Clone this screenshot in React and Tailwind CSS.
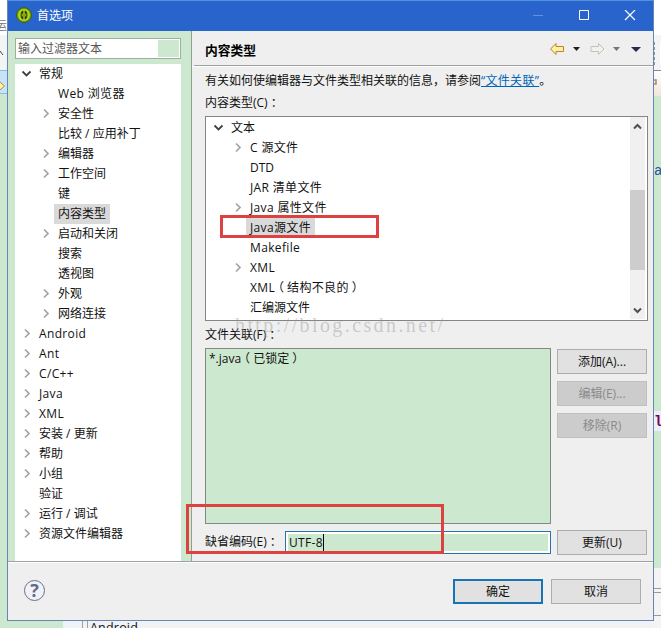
import clsx from 'clsx';

// state: 'open' | 'closed' | undefined (leaf)
const PREFERENCES = [
  { label: '常规', level: 0, state: 'open' },
  { label: 'Web 浏览器', level: 1, latin: true },
  { label: '安全性', level: 1, state: 'closed' },
  { label: '比较 / 应用补丁', level: 1 },
  { label: '编辑器', level: 1, state: 'closed' },
  { label: '工作空间', level: 1, state: 'closed' },
  { label: '键', level: 1 },
  { label: '内容类型', level: 1, selected: true },
  { label: '启动和关闭', level: 1, state: 'closed' },
  { label: '搜索', level: 1 },
  { label: '透视图', level: 1 },
  { label: '外观', level: 1, state: 'closed' },
  { label: '网络连接', level: 1, state: 'closed' },
  { label: 'Android', level: 0, state: 'closed', latin: true },
  { label: 'Ant', level: 0, state: 'closed', latin: true },
  { label: 'C/C++', level: 0, state: 'closed', latin: true },
  { label: 'Java', level: 0, state: 'closed', latin: true },
  { label: 'XML', level: 0, state: 'closed', latin: true },
  { label: '安装 / 更新', level: 0, state: 'closed' },
  { label: '帮助', level: 0, state: 'closed' },
  { label: '小组', level: 0, state: 'closed' },
  { label: '验证', level: 0 },
  { label: '运行 / 调试', level: 0, state: 'closed' },
  { label: '资源文件编辑器', level: 0, state: 'closed' },
];

const CONTENT_TYPES = [
  { label: '文本', level: 0, state: 'open' },
  { label: 'C 源文件', level: 1, state: 'closed', latin: true },
  { label: 'DTD', level: 1 },
  { label: 'JAR 清单文件', level: 1, latin: true },
  { label: 'Java 属性文件', level: 1, state: 'closed', latin: true },
  { label: 'Java源文件', level: 1, selected: true, latin: true },
  { label: 'Makefile', level: 1, latin: true },
  { label: 'XML', level: 1, state: 'closed', latin: true },
  { label: 'XML（结构不良的）', level: 1, latin: true },
  { label: '汇编源文件', level: 1 },
];

export default function App() {
  return (
    <div className="relative flex h-[628px] w-[661px] overflow-hidden bg-[#cce8cf] font-['Open_Sans','Noto_Sans_CJK_SC',sans-serif] text-[12px] leading-5 text-[#111]">
      <LeftEditorEdge />
      <div className="flex w-[647px] shrink-0 flex-col">
        <Dialog />
        <BottomEditorEdge />
      </div>
      <RightEditorEdge />

      {/* Annotations drawn over the dialog */}
      <div className="absolute left-[220px] top-[215px] h-[23px] w-[159px] border-[3px] border-[#dc4340]" />
      <div className="absolute left-[186px] top-[504px] h-[50px] w-[258px] border-[3px] border-[#dc4340]" />
      <div className="absolute left-[235px] top-[315px] whitespace-pre font-['Liberation_Serif',serif] text-[20px] leading-5 tracking-[2.4px] text-[#999]/45">
        http://blog.csdn.net/
      </div>
    </div>
  );
}

function Dialog() {
  return (
    <div className="flex h-[621px] flex-col border-x border-b border-[#6785b5] bg-[#efefef]">
      <TitleBar />
      <div className="flex h-[530px]">
        <Sidebar />
        <ContentTypesPage />
      </div>
      <div className="flex h-[59px] items-center border-t border-[#a0a0a0] pl-[16px] pr-[12px] shadow-[inset_0_1px_0_#fff]">
        <HelpIcon />
        <div className="ml-auto flex gap-2">
          <Button primary>确定</Button>
          <Button>取消</Button>
        </div>
      </div>
    </div>
  );
}

function TitleBar() {
  return (
    <div className="flex h-[31px] items-center border-t border-[#5293dc] bg-[#2964cc] pl-[8px] text-white">
      <svg className="-mt-[2px] size-4" viewBox="0 0 16 16">
        <circle cx="8" cy="8" r="7.5" fill="#69a010" stroke="#3c6510" />
        <circle cx="8" cy="8" r="6" fill="#b5d51a" />
        <path d="M7.3 3.5C5 4 4.6 6 4.6 8s.4 4 2.7 4.5zM8.7 3.5C11 4 11.4 6 11.4 8s-.4 4-2.7 4.5z" fill="#24380b" />
        <path d="M6.2 6.5v3M9.8 6.5v3" stroke="#b5d51a" />
      </svg>
      <span className="ml-[5px]">首选项</span>
      <svg className="ml-auto mr-[17px] h-[12px] w-[103px]" viewBox="0 0 103 12" fill="none">
        <path d="M0 5.5h10" stroke="#6590da" />
        <path d="M46.5 .5h9v9h-9z" stroke="#fff" />
        <path d="M92 0l10 10M102 0L92 10" stroke="#fff" strokeWidth="1.2" />
      </svg>
    </div>
  );
}

function Sidebar() {
  return (
    <div className="w-[184px] shrink-0 border-r border-[#91a093] bg-[#cce8cf] pl-[7px]">
      <div className="mt-[7px] flex h-[21px] w-[166px] items-center border border-[#a1aca2] bg-white pl-[2px] text-[#555]">
        <span>输入过滤器文本</span>
        <div className="ml-auto mr-px h-[17px] w-[21px] bg-[#cce8cf]" />
      </div>
      <div className="mt-[5px] h-[497px] w-[166px] bg-white">
        {PREFERENCES.map((item) => (
          <TreeRow key={item.label} item={item} className="pl-[6px]" />
        ))}
      </div>
    </div>
  );
}

function TreeRow({ item, className }) {
  return (
    <div className={clsx('flex h-5 items-center', className)}>
      <span className={clsx('w-[14px] shrink-0', item.level === 1 && 'ml-[19px]')}>
        {item.state && <Chevron open={item.state === 'open'} />}
      </span>
      <span
        className={clsx(
          'h-5 whitespace-nowrap px-1 leading-[19px]',
          item.selected && 'bg-[#d9d9d9]',
          item.latin && 'tracking-[0.35px]',
        )}
      >
        <WideText>{item.label}</WideText>
      </span>
    </div>
  );
}

// Full-width brackets and colons sit centred in their cell
function WideText({ children }) {
  return children.split(/([（）：])/).map((part, i) =>
    i % 2 ? (
      <span
        key={i}
        className="inline-block h-3 w-[12px] text-center leading-3 tracking-normal [font-feature-settings:'halt']"
      >
        {part}
      </span>
    ) : (
      part
    ),
  );
}

function Chevron({ open }) {
  return (
    <svg className="-mt-px h-[11px] w-[11px]" viewBox="0 0 11 11" fill="none">
      {open ? (
        <path d="M1.5 3.5l4 4 4-4" stroke="#404040" strokeWidth="1.8" />
      ) : (
        <path d="M4 1.5l4 4-4 4" stroke="#a3a3a3" strokeWidth="1.7" />
      )}
    </svg>
  );
}

function ContentTypesPage() {
  return (
    <div className="flex min-w-0 flex-1 flex-col">
      <div className="ml-[2px] flex h-[35px] items-center border-b border-[#a0a0a0] pl-[11px] pr-[12px]">
        <h1 className="mt-[3px] text-[12.75px] font-bold text-black">内容类型</h1>
        <Navigation />
      </div>
      <div className="flex flex-col border-t border-white pl-[13px]">
        <p className="mt-[4px] h-5 whitespace-nowrap">
          有关如何使编辑器与文件类型相关联的信息，请参阅
          <a className="tracking-[0.3px] text-[#0066bb] underline">“文件关联”</a>。
        </p>
        <p className="mt-[2px] h-5">
          <WideText>内容类型(C)：</WideText>
        </p>
        <div className="mt-[3px] flex h-[205px] w-[443px] border border-[#858585] bg-white">
          <div className="flex-1 pt-px">
            {CONTENT_TYPES.map((item) => (
              <TreeRow key={item.label} item={item} className="pl-[7px]" />
            ))}
          </div>
          <ScrollBar />
        </div>
        <p className="mt-[4px] h-5">
          <WideText>文件关联(F)：</WideText>
        </p>
        <div className="mt-[3px] flex gap-[6px]">
          <div className="h-[176px] w-[346px] border border-[#808a82] bg-[#cce8cf] pl-[3px] leading-[20px]">
            <WideText>*.java（已锁定）</WideText>
          </div>
          <div className="mt-px flex flex-col gap-[7px]">
            <Button>添加(A)...</Button>
            <Button disabled>编辑(E)...</Button>
            <Button disabled>移除(R)</Button>
          </div>
        </div>
        <div className="mt-[6px] flex items-start">
          <span className="mt-[2px] h-5 w-[80px] whitespace-nowrap">
            <WideText>缺省编码(E)：</WideText>
          </span>
          <div className="mt-[1px] flex h-[23px] w-[266px] border border-[#2574ad] bg-white p-[2px]">
            <div className="flex flex-1 items-center bg-[#cce8cf] pl-px">
              <span className="tracking-[0.35px]">UTF-8</span>
              <span className="h-[17px] w-px bg-black" />
            </div>
          </div>
          <Button className="ml-[6px]">更新(U)</Button>
        </div>
      </div>
    </div>
  );
}

function Navigation() {
  return (
    <svg className="ml-auto mt-px h-[16px] w-[94px]" viewBox="0 0 94 16">
      <path d="M3.5 8l5.5-5.5v3h7.5v5H9v3z" fill="#fff0a5" stroke="#b7842d" />
      <path d="M26 6h7l-3.5 4z" fill="#202020" />
      <path d="M57 8L51.500 2.500v3h-7.500v5h7.500v3z" fill="#f1f1ec" stroke="#c2c2bb" />
      <path d="M66 6h7l-3.5 4z" fill="#777" />
      <path d="M84 6h10l-5 5z" fill="#2b2b50" />
    </svg>
  );
}

function ScrollBar() {
  return (
    <div className="mr-[2px] flex h-[202px] w-[15px] flex-col bg-[#f0f0f0]">
      <svg className="ml-[3px] mt-[5px] h-[9px] w-[9px]" viewBox="0 0 9 9" fill="none">
        <path d="M1 6.5L4.5 3 8 6.5" stroke="#505050" strokeWidth="2" />
      </svg>
      <div className="mt-[59px] h-[80px] bg-[#cdcdcd]" />
      <svg className="mb-[4px] ml-[3px] mt-auto h-[9px] w-[9px]" viewBox="0 0 9 9" fill="none">
        <path d="M1 2.5L4.5 6 8 2.5" stroke="#505050" strokeWidth="2" />
      </svg>
    </div>
  );
}

function Button({ children, primary, disabled, className }) {
  return (
    <button
      disabled={disabled}
      className={clsx(
        'flex h-[25px] w-[90px] shrink-0 items-center justify-center whitespace-nowrap',
        primary ? 'border-2 border-[#1874b5]' : 'border',
        disabled ? 'border-[#bfbfbf] bg-[#cccccc] text-[#8a8a8a]' : 'bg-[#e1e1e1]',
        !primary && !disabled && 'border-[#adadad]',
        className,
      )}
    >
      <span className="mt-px">{children}</span>
    </button>
  );
}

function HelpIcon() {
  return (
    <div className="-mt-[2px] flex size-[21px] items-center justify-center rounded-full border border-[#66708a] bg-[#f0f2f7] text-[18px] font-bold text-[#5f6b8c]">
      ?
    </div>
  );
}

// Slivers of the IDE window showing around the dialog
function LeftEditorEdge() {
  return (
    <div className="flex w-[7px] shrink-0 flex-col overflow-hidden">
      <div className="flex h-[35px] items-end justify-end bg-white text-[#777]">
        <span className="leading-[18px]">运</span>
      </div>
      <div className="flex h-[35px] items-center bg-[#f3f4f4] text-[#444]">
        <svg className="h-[6px] w-[4px]" viewBox="0 0 4 6">
          <path d="M0 1l3 4" stroke="#444" />
        </svg>
      </div>
      <div className="h-[24px] border-y border-[#8abce5] bg-[#c8e2f8] pt-[10px]">
        <svg className="h-[10px] w-[6px]" viewBox="0 0 6 10">
          <path d="M0 1l4.5 4L0 9" fill="#fff2a6" stroke="#a99237" />
        </svg>
      </div>
    </div>
  );
}

function BottomEditorEdge() {
  return (
    <div className="flex h-[7px] overflow-hidden">
      <div className="w-[56px] shrink-0" />
      <div className="flex flex-1 bg-[#f0f3f5] pl-[19px]">
        <div className="flex h-[7px] flex-1 overflow-hidden border-l border-[#a1a1a1] pl-[4px]">
          <div className="flex-1 border-l border-[#a1a1a1] bg-[#f0f2f4] pl-[2px] text-[12.5px] leading-[14px] tracking-[0.2px]">
            Android
          </div>
        </div>
      </div>
    </div>
  );
}

function RightEditorEdge() {
  return (
    <div className="flex w-[7px] shrink-0 flex-col overflow-hidden">
      <div className="h-[35px] bg-white" />
      <div className="flex h-[36px] justify-between border-b border-[#888] bg-[#f3f4f5] pb-[5px] pt-[7px]">
        <div className="w-px border-l border-dashed border-[#8c969d]" />
        <div className="w-px bg-white" />
      </div>
      <div className="h-[25px] bg-linear-to-b from-white to-[#eee6d9] pt-[8px]">
        <svg className="h-[9px] w-[4px]" viewBox="0 0 4 9" fill="none">
          <path d="M0 1h2v4H0" stroke="#a78968" strokeWidth="1.5" />
        </svg>
      </div>
      <div className="flex h-[472px] flex-col font-['Liberation_Mono',monospace] text-[14px]">
        <span className="mt-[65px] text-[#2c529f]">a</span>
        <div className="mt-[230px] h-[20px] bg-[#e8f2fe] font-bold leading-[22px] text-[#7f0055]">
          l
        </div>
      </div>
      <div className="flex-1 bg-[#f4f4f4]">
        <div className="mt-[20px] h-[5px] border-y border-[#999]" />
        <div className="mt-[22px] h-px bg-[#999]" />
      </div>
    </div>
  );
}
